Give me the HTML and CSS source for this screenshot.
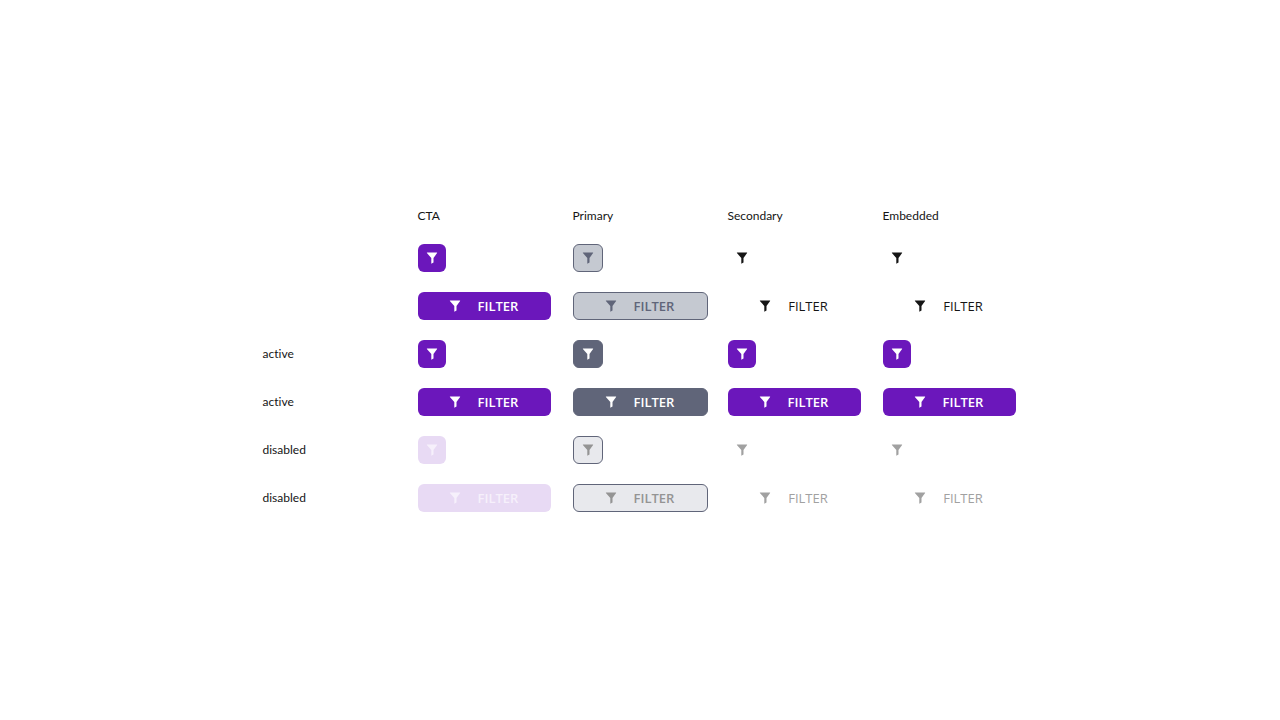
FILE: index.html
```html
<!DOCTYPE html>
<html lang="en">
<head>
<meta charset="utf-8">
<title>Filter buttons</title>
<link rel="stylesheet" href="styles.css">
</head>
<body>
<svg class="sprite" aria-hidden="true">
  <symbol id="funnel" viewBox="0 0 12 12"><path d="M.9.5h10.2v.6L7.5 5.9v4.5L5.3 11.7V5.9L.9 1.1z"/></symbol>
</svg>
<main class="matrix" id="matrix"></main>
<script src="matrix.js"></script>
</body>
</html>
```

FILE: matrix.js
```js
const variants = ["CTA", "Primary", "Secondary", "Embedded"];
const states = ["", "active", "disabled"];
const icon = '<svg class="icon" aria-hidden="true"><use href="#funnel"/></svg>';

let html = '<span></span>' + variants.map(v => `<span class="heading">${v}</span>`).join("");
for (const state of states) {
  for (const withText of [false, true]) {
    html += `<span class="state">${state}</span>`;
    for (const v of variants) {
      const classes = ["button", `button-${v.toLowerCase()}`, withText ? "button-text" : "button-icon"];
      if (state === "active") classes.push("is-active");
      const attrs = (state === "disabled" ? " disabled" : "") + (withText ? "" : ' aria-label="Filter"');
      html += `<button type="button" class="${classes.join(" ")}"${attrs}>${icon}${withText ? '<span class="button-label">FILTER</span>' : ""}</button>`;
    }
  }
}
document.getElementById("matrix").innerHTML = html;
```

FILE: styles.css
```css
* {
  box-sizing: border-box;
}

body {
  margin: 0;
  min-height: 100vh;
  display: flex;
  align-items: center;
  justify-content: center;
  background: #fff;
  color: #151515;
  font-family: Lato, "Noto Sans", sans-serif;
  font-size: 12px;
  line-height: 16px;
  font-variant-ligatures: none;
}

.sprite {
  position: absolute;
  width: 0;
  height: 0;
}

.matrix {
  display: grid;
  grid-template-columns: repeat(5, 135px);
  gap: 20px;
  align-items: center;
  justify-items: start;
}

.button {
  display: flex;
  align-items: center;
  justify-content: center;
  gap: 16px;
  min-height: 28px;
  padding: 0 8px;
  border: 0;
  border-radius: 6px;
  background: transparent;
  color: #151515;
  font-family: "Open Sans", "Noto Sans", sans-serif;
  font-size: 13px;
  line-height: 16px;
  font-weight: 500;
}

.button-text {
  min-width: 133px;
}

.button-label {
  min-width: 42px;
  text-align: center;
}

.icon {
  width: 12px;
  height: 12px;
  fill: currentColor;
}

.button-cta,
.button-primary,
.is-active {
  font-weight: 600;
}

.button-cta,
.is-active {
  background: #6b17bb;
  color: #fff;
}

.button-primary {
  border: 1px solid #606579;
  background: #c5c9d1;
  color: #606579;
}

.button-primary.button-text {
  min-width: 135px;
}

.button-primary.is-active {
  background: #606579;
  color: #fff;
}

.button:disabled {
  color: #a1a1a1;
}

.button-cta:disabled {
  background: #e8daf4;
  color: #f6f0fb;
}

.button-primary:disabled {
  background: #e8e9ed;
  color: #949494;
}
```
